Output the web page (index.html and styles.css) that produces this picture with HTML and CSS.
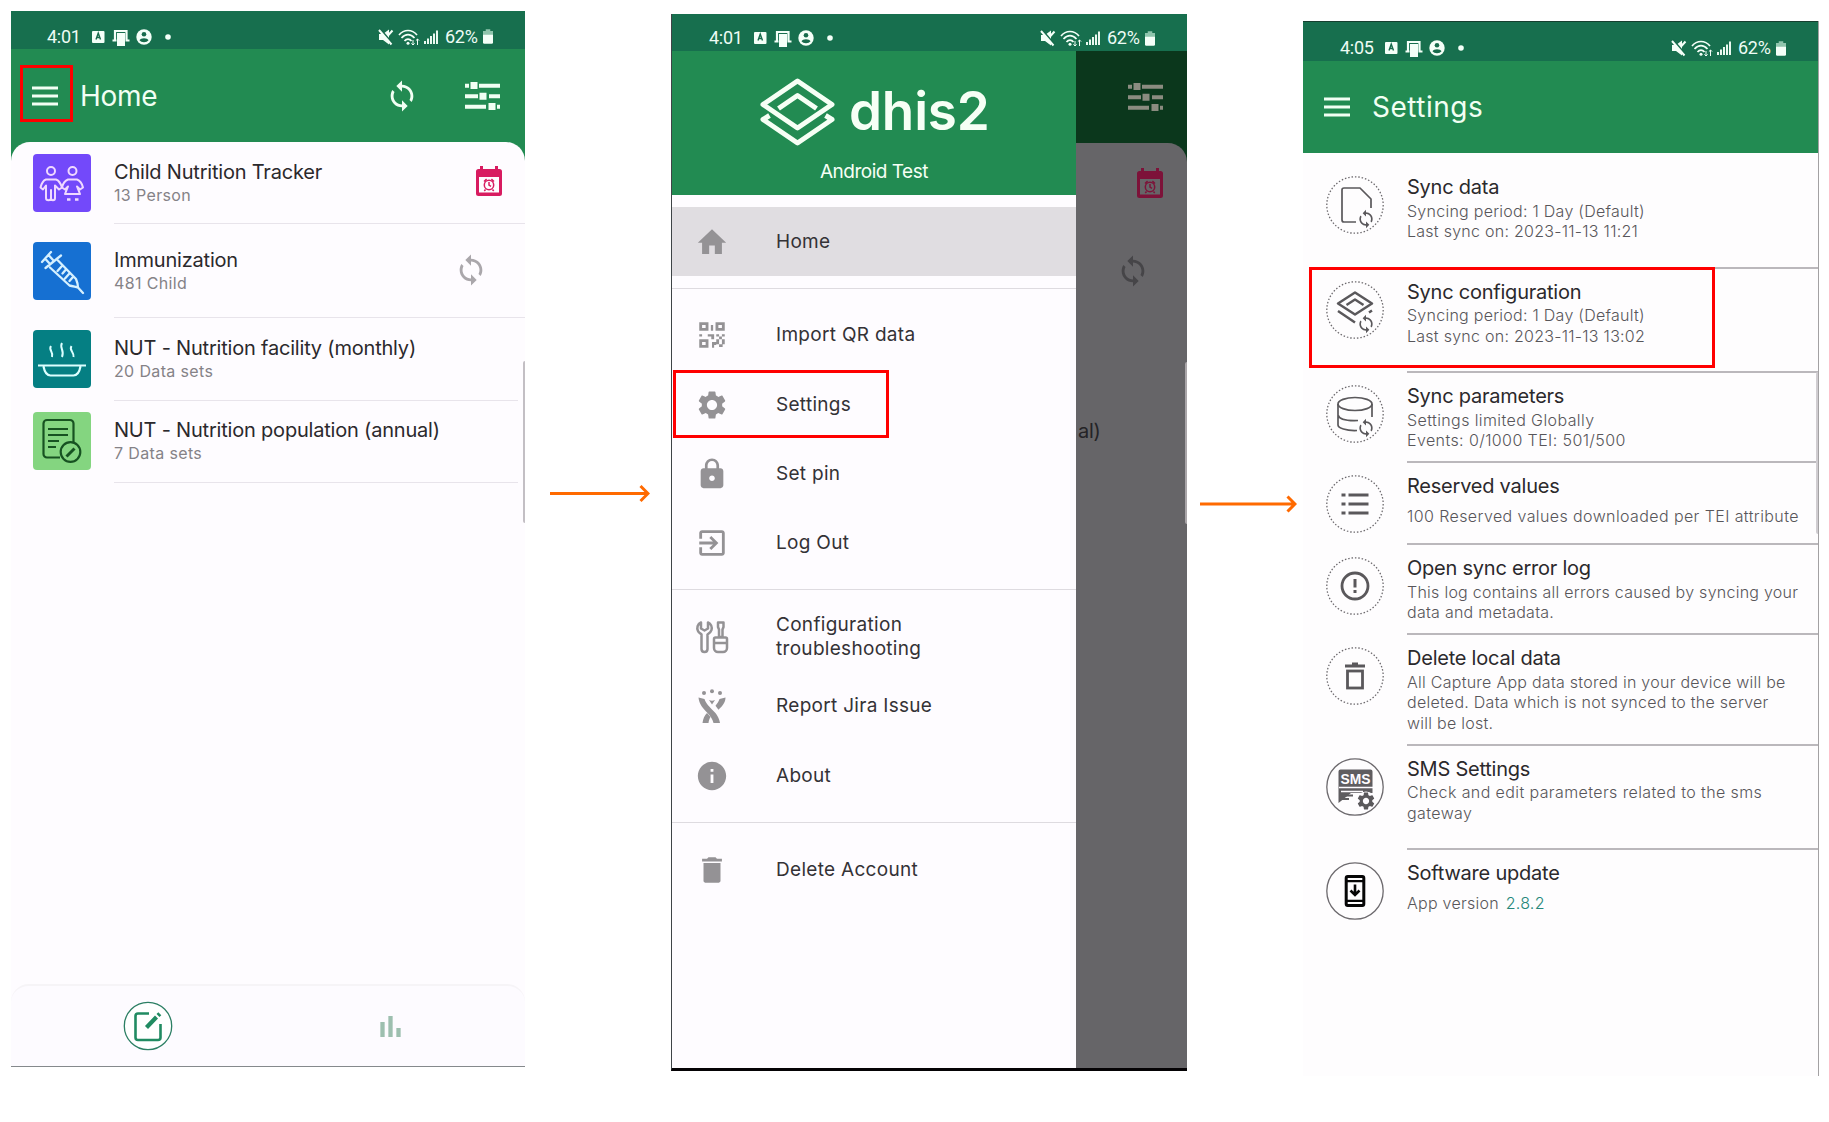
FILE: index.html
```html
<!DOCTYPE html>
<html lang="en">
<head>
<meta charset="utf-8">
<title>DHIS2 Capture - sync configuration</title>
<link rel="stylesheet" href="styles.css">
</head>
<body>
<svg class="defs" aria-hidden="true">
  <symbol id="menu" viewBox="0 0 26 20"><path d="M0 2h26M0 10h26M0 18h26" stroke="currentColor" stroke-width="3"/></symbol>
  <symbol id="sync" viewBox="0 0 24 24"><path fill="currentColor" d="M12 4V1L8 5l4 4V6c3.31 0 6 2.69 6 6 0 1.01-.25 1.97-.7 2.8l1.46 1.46C19.54 15.03 20 13.57 20 12c0-4.42-3.58-8-8-8zm0 14c-3.31 0-6-2.69-6-6 0-1.01.25-1.97.7-2.8L5.24 7.74C4.46 8.97 4 10.43 4 12c0 4.42 3.58 8 8 8v3l4-4-4-4v3z"/></symbol>
  <symbol id="tune" viewBox="0 0 35 28"><g fill="currentColor"><path d="M0 1.7h4v4H0zM14 1.7h21v4H14zM0 12.3h13v4H0zM24 12.3h11v4H24zM0 22.8h21v4H0zM32 22.8h3v4h-3z"/><path d="M5.500 0h7v7h-7zM14.500 10.700h7v7h-7zM23.500 21h7v7h-7z"/></g></symbol>
  <symbol id="calendar" viewBox="0 0 26 30"><path fill="currentColor" fill-rule="evenodd" d="M4 0h3v3h12V0h3v3h1.500A2.500 2.500 0 0 1 26 5.500v22a2.500 2.500 0 0 1-2.500 2.500h-21A2.500 2.500 0 0 1 0 27.500v-22A2.500 2.500 0 0 1 2.500 3H4zM3 11v15.500h20V11z"/><g fill="none" stroke="currentColor" stroke-width="1.500"><circle cx="13" cy="19" r="4.700"/><path d="M13 16v3.200l2 1.200M8 15.500l2.600-2.400M18 15.500l-2.600-2.400M9.500 23.500l-1.200 1.500M16.500 23.500l1.200 1.500"/></g></symbol>
  <symbol id="status-left" viewBox="0 0 80 20">
    <rect x="0" y="4" width="12.500" height="12" rx="1" fill="#f4fff8"/><path d="M4 12.500l2.250-6.300 2.250 6.300M4.800 10.500h3" fill="none" stroke="#176b4c" stroke-width="1.400"/>
    <path d="M23 12.500V4h11.500v8.500M20.500 13.500h4M33.500 13.500h4" fill="none" stroke="#f4fff8" stroke-width="2.200"/><rect x="25" y="6" width="8" height="13" fill="#f4fff8"/>
    <circle cx="52" cy="10" r="7.700" fill="#f4fff8"/><circle cx="52" cy="7.300" r="2.300" fill="#176b4c"/><path d="M47.500 13.300c1-2.900 8-2.900 9 0-1.700 2.500-7.300 2.500-9 0z" fill="#176b4c"/>
    <circle cx="76" cy="10" r="2.800" fill="#f4fff8"/>
  </symbol>
  <symbol id="status-right" viewBox="0 0 62 20">
    <path d="M1 7h4l6-4.500v15L5 13H1z" fill="#f4fff8"/><path d="M1.500 1.500l13 15" stroke="#176b4c" stroke-width="2"/><path d="M1 3l12.500 14.500M10 8.500l4.500-5" stroke="#f4fff8" stroke-width="2"/>
    <g fill="none" stroke="#f4fff8" stroke-width="1.700"><path d="M21 8c5-6 13-6 18 0M23.500 11c4-4.500 9-4.500 13 0M26.500 14c2-2.500 5-2.500 7 0"/></g><circle cx="30" cy="16.300" r="1.500" fill="#f4fff8"/><path d="M35 13v5m-1.600-1.600L35 18l1.600-1.600M39.500 18v-6m-1.600 1.600L39.500 12l1.600 1.600" stroke="#f4fff8" fill="none"/>
    <path d="M47 14v3M50 11.500V17M53 9v8M56 6.500V17M59 3.500V17" stroke="#f4fff8" stroke-width="1.900"/>
  </symbol>
  <symbol id="battery" viewBox="0 0 11 16"><path d="M3 0h5v2h3v5H0V2h3z" fill="#8fc5ad"/><path d="M0 6h11v8.500a1.500 1.500 0 0 1-1.500 1.500h-8A1.500 1.500 0 0 1 0 14.500z" fill="#f4fff8"/></symbol>
  <symbol id="gear" viewBox="0 0 24 24"><path fill="currentColor" d="M19.140 12.940c.04-.3.060-.61.060-.94 0-.32-.02-.64-.07-.94l2.030-1.580c.18-.14.23-.41.120-.61l-1.920-3.320c-.12-.22-.37-.29-.59-.22l-2.390.96c-.5-.38-1.030-.7-1.620-.94L14.400 2.810c-.04-.24-.24-.41-.48-.41h-3.840c-.24 0-.43.17-.47.41L9.250 5.350c-.59.24-1.130.57-1.620.94L5.240 5.330c-.22-.08-.47 0-.59.22L2.740 8.870c-.12.21-.08.47.12.61l2.030 1.580c-.05.3-.09.63-.09.94s.02.64.07.94l-2.030 1.580c-.18.14-.23.41-.12.61l1.920 3.320c.12.22.37.29.59.22l2.390-.96c.5.38 1.030.7 1.620.94l.36 2.540c.05.24.24.41.48.41h3.840c.24 0 .44-.17.47-.41l.36-2.540c.59-.24 1.130-.56 1.620-.94l2.390.96c.22.08.47 0 .59-.22l1.920-3.320c.12-.22.070-.47-.12-.61l-2.010-1.580zM12 15.600c-1.980 0-3.600-1.620-3.600-3.600s1.620-3.600 3.600-3.600 3.600 1.620 3.600 3.600-1.620 3.600-3.600 3.600z"/></symbol>
</svg>

<main class="board">
  <section class="phone home">
    <div class="status">
      <span class="clock">4:01</span><svg class="st-left"><use href="#status-left"/></svg>
      <svg class="st-right"><use href="#status-right"/></svg><span class="pct">62%</span><svg class="batt"><use href="#battery"/></svg>
    </div>
    <header class="bar">
      <svg class="ic-menu"><use href="#menu"/></svg>
      <h1>Home</h1>
      <svg class="ic-sync"><use href="#sync"/></svg>
      <svg class="ic-tune"><use href="#tune"/></svg>
      <i class="mark mark-menu"></i>
    </header>
    <div class="sheet">
      <div class="programs">
        <article class="program r1">
          <svg class="tile purple" viewBox="0 0 58 58"><g fill="none" stroke="#f0d9ff" stroke-width="2" stroke-linejoin="round"><circle cx="18" cy="17" r="4"/><circle cx="39.500" cy="17" r="4"/><path d="M13 25.500h10c3 1 5 5 6 8l-3 2-4-4v12.500c0 3-4 3-4 0V36v8c0 3-5 3-5 0V31.500l-3 4-2.500-2c1-4 2.500-7 5.500-8z"/><path d="M35 25.500h9c3 1 5 4 6 8l-3 2-3-3 3 7.500H32l3-7.500-3 3-3-2c1-4 3-7 6-8z"/><path d="M34 45.500h3.500M42 45.500h3.500" stroke-width="2.600"/></g></svg>
          <div class="label"><h2>Child Nutrition Tracker</h2><p>13 Person</p></div>
          <svg class="ic-cal"><use href="#calendar"/></svg>
        </article>
        <article class="program r2">
          <svg class="tile blue" viewBox="0 0 58 58"><g fill="none" stroke="#d5f0ff" stroke-width="2.300" stroke-linejoin="round" stroke-linecap="round"><path d="M9 20l9-10M12 16.500l5 5.500M15.500 13l5 5.500M12.500 26L28 13.500M17 25.500l19.500 18c3 .5 6 1.500 8.500 2 0-3-.5-5-2-8.500L25 18.500M45 45.500l5 5.500M28.500 24.500l-4 4.500M32.500 28l-3 3.500M36 32l-4 4.500M39.500 35.500l-3 3.500"/></g></svg>
          <div class="label"><h2>Immunization</h2><p>481 Child</p></div>
          <svg class="ic-sync grey"><use href="#sync"/></svg>
        </article>
        <article class="program r3 short">
          <svg class="tile teal" viewBox="0 0 58 58"><g fill="none" stroke="#dcffff" stroke-width="2"><path d="M5 35.500h48M10.500 36.500c1 5 3 9 7 9h23c4 0 6-4 7-9" stroke-width="2.200"/><path d="M18 16c-3 4 3 6 1 11M29 13c-3 5 3 7 0 14M38.500 16c-3 4 3 6 2 11"/></g></svg>
          <div class="label"><h2>NUT - Nutrition facility (monthly)</h2><p>20 Data sets</p></div>
        </article>
        <article class="program r4 short">
          <svg class="tile green" viewBox="0 0 58 58"><g fill="none" stroke="#175221" stroke-width="2.200"><path d="M27 45.500H14a3.500 3.500 0 0 1-3.500-3.500V11.500A3.500 3.500 0 0 1 14 8h23a3.500 3.500 0 0 1 3.500 3.500V31M15 17h20M15 23h20M15 29h11M15 35h8"/><circle cx="37.500" cy="40" r="9.800"/><path d="M33.500 44.500l8-8" stroke-width="3"/></g></svg>
          <div class="label"><h2>NUT - Nutrition population (annual)</h2><p>7 Data sets</p></div>
        </article>
      </div>
      <nav class="tabs">
        <svg class="tab-edit" viewBox="0 0 50 50"><circle cx="25" cy="25" r="23.700" fill="#fff" stroke="#2c7f64" stroke-width="1.300"/><path d="M26 12.500H15a2.500 2.500 0 0 0-2.500 2.500v21.500A2.500 2.500 0 0 0 15 39h20a2.500 2.500 0 0 0 2.500-2.500V23" fill="none" stroke="#218b62" stroke-width="2.600"/><path d="M23.500 26.500l10-10.500M35 14.500l1.800-1.800" stroke="#218b62" stroke-width="4.200"/></svg>
        <svg class="tab-stats" viewBox="0 0 21 21"><path d="M2.500 6v15M10.500 0v21M18.500 12v9" stroke="#9dbfaf" stroke-width="4.300"/></svg>
      </nav>
      <i class="thumb"></i>
    </div>
  </section>

  <svg class="arrow first" viewBox="0 0 100 20"><path d="M0 10.500h97M90.500 3L98 10.500 90.500 18" fill="none" stroke="#ff6a00" stroke-width="3"/></svg>

  <section class="phone drawer-phone">
    <div class="status">
      <span class="clock">4:01</span><svg class="st-left"><use href="#status-left"/></svg>
      <svg class="st-right"><use href="#status-right"/></svg><span class="pct">62%</span><svg class="batt"><use href="#battery"/></svg>
    </div>
    <div class="split">
      <aside class="drawer">
        <div class="brand">
          <div class="logo">
            <svg viewBox="0 0 75 68"><g fill="none" stroke="#f6fff5" stroke-width="5" stroke-linejoin="round"><path d="M37.500 3L72 26.500 37.500 50 3 26.500z"/><path d="M18.500 30.500l19-13 19 13"/><path d="M9.500 37.500L3 41.500l34.500 23.500L72 41.500l-6.500-4"/></g></svg>
            <b>dhis2</b>
          </div>
          <p>Android Test</p>
        </div>
        <ul class="group">
          <li class="active"><svg viewBox="0 0 24 24"><path d="M10 20.500v-6h4v6h5v-8h3L12 3 2 12.500h3v8z"/></svg><span>Home</span></li>
        </ul>
        <ul class="group">
          <li><svg viewBox="0 0 24 24"><path fill-rule="evenodd" d="M3 3h6.500v6H3zM5 5v2h2.500V5zM14.500 3H21v6h-6.500zM16.500 5v2H19V5zM3 15h6.500v6H3zM5 17v2h2.500v-2zM11.200 5h1.600v4h-1.600zM3 11.500h2V13H3zM9 11.500h4.500V15h-2v-2H9zM12 17h3v-2h2v-2h-2v-1.500h2V13h2v-1.500h2V13h-2v2h2v3.500h-1.500v2H17v-2h-2V19h-1.500v2H12zM17 15v3.500h2V15z"/></svg><span>Import QR data</span></li>
          <li class="settings"><svg><use href="#gear"/></svg><span>Settings</span><i class="mark mark-settings"></i></li>
          <li><svg viewBox="0 0 24 24"><path d="M18 8h-1V6c0-2.760-2.240-5-5-5S7 3.240 7 6v2H6c-1.100 0-2 .9-2 2v10c0 1.100.9 2 2 2h12c1.100 0 2-.9 2-2V10c0-1.100-.9-2-2-2zm-6 9c-1.100 0-2-.9-2-2s.9-2 2-2 2 .9 2 2-.9 2-2 2zm3.100-9H8.900V6c0-1.710 1.390-3.100 3.100-3.100s3.100 1.390 3.100 3.100v2z"/></svg><span>Set pin</span></li>
          <li><svg viewBox="0 0 24 24"><path d="M10.090 15.590L11.500 17l5-5-5-5-1.410 1.410L12.670 11H3v2h9.670l-2.580 2.590zM19 3H5c-1.110 0-2 .9-2 2v4h2V5h14v14H5v-4H3v4c0 1.100.89 2 2 2h14c1.100 0 2-.9 2-2V5c0-1.100-.9-2-2-2z"/></svg><span>Log Out</span></li>
        </ul>
        <ul class="group">
          <li><svg viewBox="0 0 34 34"><g fill="none" stroke="#949295" stroke-width="2.500" stroke-linejoin="round"><path d="M6 2.500C2.500 4 1.500 8 3 11c.7 1.500 2.500 2.500 3.500 3.500V29c0 4 6 4 6 0V14.500c1.500-1 3.500-2.500 4-4.500.7-3-.5-6.300-3.500-7.500v6L9.500 10.500 6 8.500z"/><path d="M23 2.500h5.500V7l-1 2.500V17h-3.500V9.500L23 7zM20.500 17.500h10a1.500 1.500 0 0 1 1.500 1.500v9a4 4 0 0 1-4 4h-5a4 4 0 0 1-4-4v-9a1.500 1.500 0 0 1 1.500-1.500zM19 23h13"/></g></svg><span>Configuration<br>troubleshooting</span></li>
          <li><svg viewBox="0 0 34 34"><circle cx="9" cy="4" r="2"/><circle cx="17" cy="2.300" r="2"/><circle cx="25" cy="4" r="2"/><path d="M14 11c2 1 4 1 6 0L17 15.500zM3.500 8.500l6 1.500c1.500 5 5 7.500 9 12 2.500 2.500 5.500 6 6.500 12h-6.500c-1-4-3-7-6-10-4.500-4.500-8.500-9-9-15.500zM30.500 8.500l-6 1.500c-.8 2.500-2.200 4.500-4 6.700l3 4c4-3.700 7-7.200 7-12.200zM12 24l3.500 4c-1 1.500-1.700 3.500-2 6h-6c.5-4.500 2-7.500 4.500-10z"/></svg><span>Report Jira Issue</span></li>
          <li><svg viewBox="0 0 24 24"><path d="M12 2C6.480 2 2 6.480 2 12s4.480 10 10 10 10-4.480 10-10S17.520 2 12 2zm1 15h-2v-6h2v6zm0-8h-2V7h2v2z"/></svg><span>About</span></li>
        </ul>
        <ul class="group">
          <li><svg viewBox="0 0 24 24"><path d="M6 19.500c0 1 .9 1.500 2 1.500h8c1.100 0 2-.5 2-1.500V7H6v12.500zM19 4h-3.500l-1-1h-5l-1 1H5v2h14V4z"/></svg><span>Delete Account</span></li>
        </ul>
      </aside>
      <div class="behind">
        <div class="behind-bar"><svg class="ic-tune"><use href="#tune"/></svg></div>
        <div class="behind-sheet">
          <div class="b1"><svg class="ic-cal"><use href="#calendar"/></svg></div>
          <div class="b2"><svg class="ic-sync"><use href="#sync"/></svg></div>
          <div class="b3"></div>
          <div class="b4">al)</div>
          <i class="thumb"></i>
        </div>
      </div>
    </div>
  </section>

  <svg class="arrow second" viewBox="0 0 97 20"><path d="M0 10h94M87.500 2.500L95 10l-7.500 7.500" fill="none" stroke="#ff6a00" stroke-width="3"/></svg>

  <section class="phone settings-phone">
    <div class="status">
      <span class="clock">4:05</span><svg class="st-left"><use href="#status-left"/></svg>
      <svg class="st-right"><use href="#status-right"/></svg><span class="pct">62%</span><svg class="batt"><use href="#battery"/></svg>
    </div>
    <header class="bar"><svg class="ic-menu"><use href="#menu"/></svg><h1>Settings</h1></header>
    <div class="options">
      <article class="option h104">
        <svg viewBox="0 0 58 58"><circle class="ring" cx="29" cy="29" r="28.200"/><path class="line" d="M30 46H18a2 2 0 0 1-2-2V14a2 2 0 0 1 2-2h16l11 11v9"/><use href="#sync" x="30" y="33" width="20" height="20"/></svg>
        <div class="text"><h2>Sync data</h2><p>Syncing period: 1 Day (Default)<br>Last sync on: 2023-11-13 11:21</p></div>
      </article>
      <article class="option h104">
        <svg viewBox="0 0 58 58"><circle class="ring" cx="29" cy="29" r="28.200"/><g class="line bold"><path d="M29 11.500L46 22.500 29 33.500 12 22.500zM20.500 24l8.500-5.500 8.500 5.500M12 30l17 11.500M43 31.500l3-2"/></g><use href="#sync" x="30" y="33" width="20" height="20"/></svg>
        <div class="text"><h2>Sync configuration</h2><p>Syncing period: 1 Day (Default)<br>Last sync on: 2023-11-13 13:02</p></div>
        <i class="mark mark-config"></i>
      </article>
      <article class="option h90">
        <svg viewBox="0 0 58 58"><circle class="ring" cx="29" cy="29" r="28.200"/><g class="line"><ellipse cx="29" cy="19" rx="17" ry="6.500"/><path d="M12 19v21c0 3 8 6 19 5.500M12 30c1 4 8 6 20 5.500M46 19v13"/></g><use href="#sync" x="30" y="33" width="20" height="20"/></svg>
        <div class="text wide"><h2>Sync parameters</h2><p>Settings limited Globally<br>Events: 0/1000 TEI: 501/500</p></div>
      </article>
      <article class="option h82 spaced">
        <svg viewBox="0 0 58 58"><circle class="ring" cx="29" cy="29" r="28.200"/><path d="M15.500 20h4M15.500 29h4M15.500 38h4M22.500 20h20M22.500 29h20M22.500 38h20" stroke="#5a585b" stroke-width="2.800"/></svg>
        <div class="text wide"><h2>Reserved values</h2><p>100 Reserved values downloaded per TEI attribute</p></div>
      </article>
      <article class="option h90">
        <svg viewBox="0 0 58 58"><circle class="ring" cx="29" cy="29" r="28.200"/><circle cx="29" cy="29" r="13" fill="none" stroke="#5a585b" stroke-width="2.800"/><path d="M29 22v8.500M29 33v3" stroke="#5a585b" stroke-width="3"/></svg>
        <div class="text"><h2>Open sync error log</h2><p>This log contains all errors caused by syncing your<br>data and metadata.</p></div>
      </article>
      <article class="option h110">
        <svg viewBox="0 0 58 58"><circle class="ring" cx="29" cy="29" r="28.200"/><path d="M19 19h20M26 17h6" stroke="#5a585b" stroke-width="2.800"/><rect x="21.500" y="24" width="15" height="17" fill="none" stroke="#5a585b" stroke-width="2.800"/></svg>
        <div class="text"><h2>Delete local data</h2><p>All Capture App data stored in your device will be<br>deleted. Data which is not synced to the server<br>will be lost.</p></div>
      </article>
      <article class="option h105">
        <svg viewBox="0 0 58 58"><circle class="ring solid" cx="29" cy="29" r="28.200"/><path d="M14.500 11.500h30a2 2 0 0 1 2 2V35H25l-12.500 10V13.500a2 2 0 0 1 2-2z" fill="#5f5d60"/><path d="M13 29.500h34M15 33.500h22" stroke="#fefcff" stroke-width="1.300"/><path d="M15 37.500h12M15 41h8" stroke="#5f5d60" stroke-width="1.800"/><text x="14.500" y="26.300" textLength="30" lengthAdjust="spacingAndGlyphs">SMS</text><circle cx="40" cy="43" r="9.500" fill="#fefcff"/><use href="#gear" x="29.500" y="32.500" width="21" height="21"/></svg>
        <div class="text wide"><h2>SMS Settings</h2><p>Check and edit parameters related to the sms<br>gateway</p></div>
      </article>
      <article class="option last spaced">
        <svg viewBox="0 0 58 58"><circle class="ring solid" cx="29" cy="29" r="28.200"/><rect x="20.200" y="14.500" width="17.600" height="29" rx="1.500" fill="none" stroke="#060606" stroke-width="3"/><path d="M20 19.200h18M20 38.800h18" stroke="#060606" stroke-width="2.200"/><path d="M29 22.500v10M24.500 28.500L29 33l4.500-4.500" fill="none" stroke="#060606" stroke-width="2.600"/></svg>
        <div class="text"><h2>Software update</h2><p>App version <span>2.8.2</span></p></div>
      </article>
      <i class="thumb"></i>
    </div>
  </section>
</main>
</body>
</html>
```

FILE: styles.css
```css
* { box-sizing: border-box; margin: 0; padding: 0; }
body { width: 1829px; height: 1122px; overflow: hidden; background: #fff; font-family: Inter, "Liberation Sans", sans-serif; color: #2b292c; }
h1, h2 { font-weight: 400; }
ul { list-style: none; }
.defs { position: absolute; width: 0; height: 0; }
.board { display: flex; align-items: flex-start; height: 1122px; padding-left: 11px; }
.phone { flex: none; background: #fefcff; overflow: hidden; display: flex; flex-direction: column; }
.home { width: 514px; height: 1056px; margin-top: 11px; border-bottom: 1px solid #85898c; }
.drawer-phone { width: 516px; height: 1057px; margin-top: 14px; border-left: 1px solid #3f4447; border-bottom: 3px solid #050305; }
.settings-phone { width: 516px; height: 1055px; margin-top: 21px; border-right: 1px solid #a3a1a3; background: #fefdfe; }
.arrow { flex: none; height: 20px; }
.first { width: 100px; margin: 483px 21px 0 25px; }
.second { width: 97px; margin: 494px 6px 0 13px; }

/* status bar */
.status { flex: none; height: 38px; display: flex; align-items: center; padding: 13px 32px 0 36px; background: #176f4e; color: #eefcf5; font: 18px/22px Roboto, sans-serif; letter-spacing: -.3px; }
.drawer-phone .status { height: 37px; padding: 11px 32px 0 37px; }
.settings-phone .status { height: 40px; padding: 13px 32px 0 37px; border-top: 1px solid #163f2f; }
.clock { width: 45px; white-space: nowrap; }
.st-left { width: 80px; height: 20px; margin-right: auto; }
.st-right { width: 62px; height: 20px; margin-right: 5px; }
.pct { width: 37px; }
.batt { width: 10px; height: 15px; margin-left: 1px; }

/* app bar */
.bar { flex: none; position: relative; display: flex; align-items: center; height: 93px; padding: 0 25px 0 21px; background: #228b52; color: #f1fff3; }
.bar h1 { font-size: 28px; line-height: 34px; margin: 0 auto 0 22px; letter-spacing: -.3px; }
.settings-phone .bar { height: 92px; }
.settings-phone .bar h1 { letter-spacing: .5px; }
.ic-menu { width: 26px; height: 20px; }
.ic-sync { width: 34px; height: 34px; }
.ic-tune { width: 35px; height: 28px; margin-left: 46px; }
.ic-cal { width: 26px; height: 30px; color: #d81b60; }
.mark { position: absolute; border: 3px solid #f00; }
.mark-menu { left: 9px; top: 16px; width: 53px; height: 57px; }

/* program list */
.sheet { position: relative; flex: 1; display: flex; flex-direction: column; justify-content: space-between; background: linear-gradient(#228b52 20px, #fefcff 20px); }
.programs { background: #fefcff; border-radius: 19px 19px 0 0; }
.program { display: grid; grid-template-columns: 58px 1fr auto; column-gap: 23px; margin-left: 22px; align-items: start; position: relative; }
.program::after { content: ""; grid-column: 2 / 4; align-self: end; height: 1px; background: #e8e4eb; }
.program.short { margin-right: 7px; }
.r1 { height: 82px; padding-top: 12px; }
.r2 { height: 94px; padding-top: 18px; }
.r3 { height: 83px; padding-top: 12px; }
.r4 { height: 82px; padding-top: 11px; }
.tile { width: 58px; height: 58px; border-radius: 4px; }
.purple { background: #7349fa; }
.blue { background: #1670d2; }
.teal { background: #057f83; }
.green { background: #84d580; }
.label h2 { font-size: 20px; line-height: 26px; padding-top: 5px; letter-spacing: -.2px; white-space: nowrap; }
.label p { font-size: 16px; line-height: 20px; letter-spacing: .36px; color: #858287; }
.program .ic-cal { margin: 12px 23px 0 0; }
.program .ic-sync { margin: 11px 37px 0 0; }
.grey { color: #aaa7ab; }
.tabs { height: 82px; border-top: 2px solid #f6f4f7; border-radius: 18px 18px 0 0; display: flex; align-items: center; background: #fdfbff; }
.tab-edit { width: 50px; height: 50px; margin-left: 112px; }
.tab-stats { width: 21px; height: 21px; margin-left: 207px; }
.thumb { position: absolute; width: 2px; height: 162px; top: 219px; right: 0; background: #c3bfc4; border-radius: 2px 0 0 2px; }

/* navigation drawer */
.split { flex: 1; display: flex; }
.drawer { width: 404px; background: #fefcff; }
.brand { height: 144px; background: #228b52; padding-top: 27px; color: #f6fff5; }
.logo { display: flex; align-items: center; height: 68px; padding-left: 88px; }
.logo svg { width: 75px; height: 68px; }
.logo b { font-size: 53px; font-weight: 600; line-height: 60px; margin: -3px 0 0 14px; letter-spacing: -.2px; }
.brand p { font-size: 19px; line-height: 24px; margin: 14px 0 0 148px; letter-spacing: -.5px; }
.group { padding: 12px 0 11.500px; border-bottom: 1px solid #dedbe0; }
.group:last-child { border: 0; }
.group li { position: relative; height: 69.300px; display: flex; align-items: center; gap: 47px; padding-left: 23px; font-size: 19px; line-height: 24px; letter-spacing: .3px; color: #343236; }
.group li svg { width: 34px; height: 34px; fill: #949295; color: #949295; }
.group li.active { background: #e0dde1; }
.mark-settings { left: 1px; top: 0; width: 216px; height: 68px; }
.behind { flex: 1; display: flex; flex-direction: column; background: #0b371c; }
.behind-bar { height: 92px; display: flex; align-items: center; padding-left: 6px; color: #8b8c80; }
.behind-sheet { position: relative; flex: 1; background: #666568; border-top-right-radius: 19px; color: #242326; }
.b1 { height: 82px; padding: 25px 0 0 61px; }
.b2 { height: 94px; padding: 29px 0 0 40px; color: #464548; }
.behind .ic-cal { color: #7d1239; }
.b3 { height: 82px; }
.b4 { padding: 17px 0 0 2px; font-size: 20px; line-height: 26px; letter-spacing: -.23px; }
.behind .thumb { background: #aaa6a9; }

/* settings list */
.options { position: relative; flex: 1; padding-top: 11px; }
.option { position: relative; display: grid; grid-template-columns: 58px 1fr; column-gap: 23px; margin-left: 23px; padding-top: 12px; }
.option::after { content: ""; grid-column: 2; align-self: end; height: 2px; background: #bbb8bc; }
.option.last::after { display: none; }
.option > svg { width: 58px; height: 58px; color: #5a585b; }
.h104 { height: 104.500px; }
.h90 { height: 90px; }
.h82 { height: 82px; }
.h110 { height: 110.500px; }
.h105 { height: 104.500px; }
.ring { fill: none; stroke: #6d6a6e; stroke-width: 1.3; stroke-dasharray: 1.5 1.9; }
.ring.solid { stroke-dasharray: none; }
.line { fill: none; stroke: #5a585b; stroke-width: 1.7; stroke-linejoin: round; }
.line.bold { stroke-width: 2.5; }
.option text { font: 700 15px "Liberation Sans", sans-serif; fill: #fefcff; }
.text { margin-top: -1px; }
.text h2 { font-size: 20px; line-height: 25.500px; letter-spacing: -.23px; }
.text p { font-size: 16px; font-weight: 300; line-height: 20.500px; letter-spacing: .26px; color: #58565a; white-space: nowrap; }
.text.wide p { letter-spacing: .4px; }
.spaced p { margin-top: 6px; }
.text span { color: #26877a; margin-left: 2px; }
.mark-config { left: -17px; top: -2px; width: 406px; height: 101px; }
.options .thumb { top: 219px; right: 0; background: #d0cdd1; }
```
